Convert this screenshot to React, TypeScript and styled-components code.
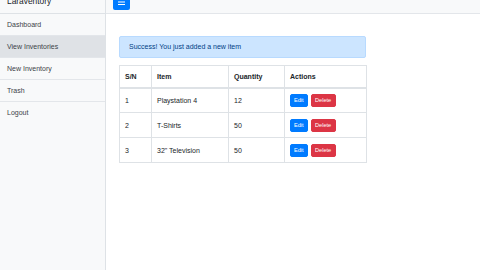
import React from 'react';
import styled, { createGlobalStyle } from 'styled-components';

const GlobalStyle = createGlobalStyle`
  *, *::before, *::after {
    box-sizing: border-box;
  }
  html, body {
    margin: 0;
    padding: 0;
    background: #fff;
    overflow: hidden;
  }
  body {
    font-family: "Liberation Sans", Arial, sans-serif;
    color: #212529;
  }
`;

const Wrapper = styled.div`
  display: flex;
  margin-top: -10px;
  min-height: 280px;
`;

const Sidebar = styled.aside`
  width: 106px;
  flex-shrink: 0;
  background: #f8f9fa;
  border-right: 1px solid #dee2e6;
  display: flex;
  flex-direction: column;
`;

const SidebarHeading = styled.div`
  height: 24px;
  padding: 0 7px;
  font-size: 8.4px;
  line-height: 23px;
  border-bottom: 1px solid #dee2e6;
  color: #212529;
`;

const NavItem = styled.a<{ $active?: boolean }>`
  display: block;
  height: 22px;
  padding: 0 7px;
  line-height: 21px;
  font-size: 7px;
  color: #3d4248;
  text-decoration: none;
  background: ${p => (p.$active ? '#dfe2e6' : '#f8f9fa')};
  border-bottom: 1px solid #e3e6ea;

  &:last-child {
    border-bottom: none;
  }
`;

const Main = styled.main`
  flex: 1;
  display: flex;
  flex-direction: column;
`;

const Navbar = styled.nav`
  height: 24px;
  padding: 0 7px;
  display: flex;
  align-items: center;
  background: #f8f9fa;
  border-bottom: 1px solid #e3e6ea;
`;

const MenuButton = styled.button`
  width: 17px;
  height: 17px;
  border: none;
  border-radius: 2px;
  background: #007bff;
  padding: 0;
  display: flex;
  align-items: center;
  justify-content: center;
`;

const Content = styled.div`
  padding: 22px 13px;
  width: 273px;
`;

const Alert = styled.div`
  height: 22px;
  padding: 0 9px;
  line-height: 20px;
  font-size: 7px;
  color: #004085;
  background: #cce5ff;
  border: 1px solid #b8daff;
  border-radius: 2px;
  margin-bottom: 7px;
`;

const Table = styled.table`
  width: 247px;
  border-collapse: collapse;
  font-size: 7px;
  table-layout: fixed;
`;

const Th = styled.th<{ $w: number }>`
  width: ${p => p.$w}px;
  text-align: left;
  font-weight: bold;
  height: 22px;
  padding: 0 5px;
  border: 1px solid #dee2e6;
  border-bottom-width: 2px;
  vertical-align: middle;
`;

const Td = styled.td`
  height: 25px;
  padding: 0 5px;
  border: 1px solid #dee2e6;
  vertical-align: middle;
`;

const Actions = styled.div`
  display: flex;
  gap: 3px;
`;

const SmallButton = styled.button<{ $variant: 'primary' | 'danger' }>`
  height: 13px;
  padding: 0 3px;
  min-width: ${p => (p.$variant === 'primary' ? 17 : 25)}px;
  border: 1px solid ${p => (p.$variant === 'primary' ? '#007bff' : '#dc3545')};
  border-radius: 2px;
  background: ${p => (p.$variant === 'primary' ? '#007bff' : '#dc3545')};
  color: #fff;
  font-family: "Liberation Sans", Arial, sans-serif;
  font-size: 5.6px;
  line-height: 11px;
`;

const items = [
  { sn: 1, name: 'Playstation 4', qty: 12 },
  { sn: 2, name: 'T-Shirts', qty: 50 },
  { sn: 3, name: '32" Television', qty: 50 },
];

export default function App() {
  return (
    <>
      <GlobalStyle />
      <Wrapper>
        <Sidebar>
          <SidebarHeading>Laraventory</SidebarHeading>
          <NavItem>Dashboard</NavItem>
          <NavItem $active>View Inventories</NavItem>
          <NavItem>New Inventory</NavItem>
          <NavItem>Trash</NavItem>
          <NavItem>Logout</NavItem>
        </Sidebar>
        <Main>
          <Navbar>
            <MenuButton>
              <svg width="7" height="6" viewBox="0 0 7 6">
                <rect x="0" y="0" width="7" height="1" fill="#fff" />
                <rect x="0" y="2.5" width="7" height="1" fill="#fff" />
                <rect x="0" y="5" width="7" height="1" fill="#fff" />
              </svg>
            </MenuButton>
          </Navbar>
          <Content>
            <Alert>Success! You just added a new item</Alert>
            <Table>
              <thead>
                <tr>
                  <Th $w={32}>S/N</Th>
                  <Th $w={77}>Item</Th>
                  <Th $w={56}>Quantity</Th>
                  <Th $w={82}>Actions</Th>
                </tr>
              </thead>
              <tbody>
                {items.map(it => (
                  <tr key={it.sn}>
                    <Td>{it.sn}</Td>
                    <Td>{it.name}</Td>
                    <Td>{it.qty}</Td>
                    <Td>
                      <Actions>
                        <SmallButton $variant="primary">Edit</SmallButton>
                        <SmallButton $variant="danger">Delete</SmallButton>
                      </Actions>
                    </Td>
                  </tr>
                ))}
              </tbody>
            </Table>
          </Content>
        </Main>
      </Wrapper>
    </>
  );
}
